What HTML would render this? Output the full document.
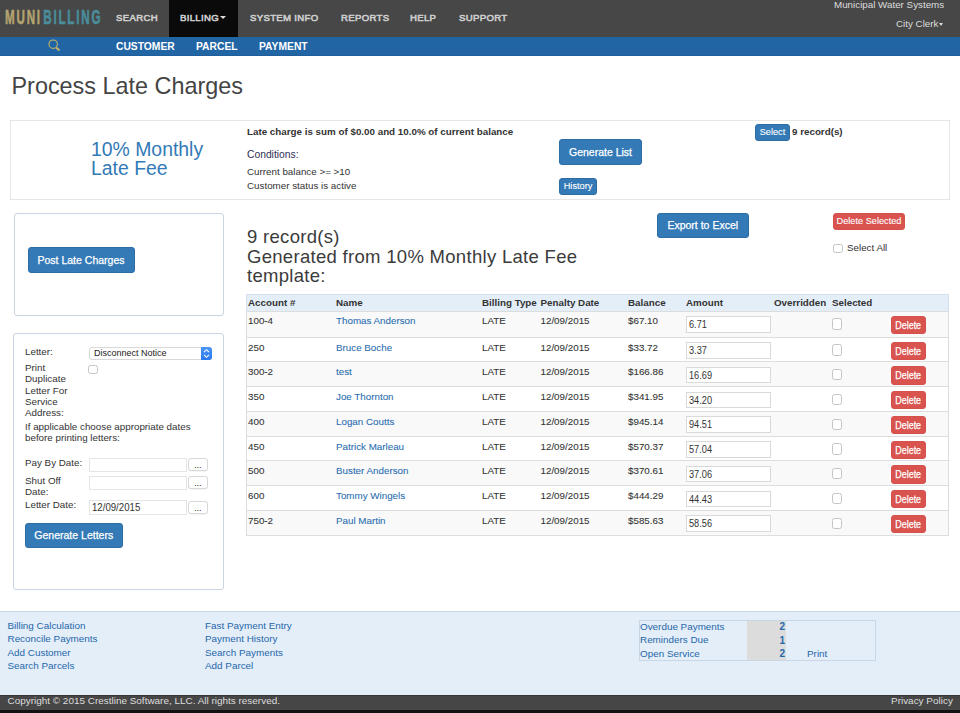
<!DOCTYPE html>
<html><head><meta charset="utf-8">
<style>
*{box-sizing:border-box;margin:0;padding:0}
html,body{width:960px;height:713px;overflow:hidden;background:#fff;font-family:"Liberation Sans",sans-serif;color:#333;font-size:9.8px}
.a{position:absolute;white-space:nowrap}
#hdr{position:absolute;left:0;top:0;width:960px;height:37px;background:#474747}
#sub{position:absolute;left:0;top:37px;width:960px;height:19px;background:#2265a5;border-bottom:1px solid #1f5e9c}
.nav{position:absolute;top:12px;font-weight:normal;-webkit-text-stroke:0.55px #d0d0d0;color:#d0d0d0;font-size:9.6px;letter-spacing:0.32px;line-height:12px}
.subn{position:absolute;top:41px;font-weight:bold;color:#fff;font-size:10.3px;line-height:12px}
.btn{position:absolute;background:#337ab7;border:1px solid #2e6da4;border-radius:3px;color:#fff;-webkit-text-stroke:0.25px #fff;text-align:center;white-space:nowrap}
.btnr{position:absolute;background:#d9534f;border:1px solid #d6504c;border-radius:3px;color:#fff;-webkit-text-stroke:0.25px #fff;text-align:center;white-space:nowrap}
.panel{position:absolute;border:1px solid #c9d5e3;border-radius:3px}
.lnk{color:#2a6eb0}
.cb{position:absolute;width:10px;height:10px;border:1px solid #c4c4c4;border-radius:2.5px;background:#fff}

.td{position:absolute;white-space:nowrap;font-size:9.8px;line-height:11px;-webkit-text-stroke:0.08px currentColor}
.th{position:absolute;white-space:nowrap;font-size:9.8px;line-height:11px;font-weight:bold}
.inp{position:absolute;width:85px;height:16.5px;border:1px solid #d9d9d9;background:#fff;font-size:11.5px;line-height:14.5px;padding-left:1.5px;color:#333}
.inp span{display:inline-block;transform:scaleX(0.8);transform-origin:0 50%}
.fl{position:absolute;white-space:nowrap;font-size:9.9px;line-height:11px;color:#2567a9}
.caret{display:inline-block;width:0;height:0;border-left:3px solid transparent;border-right:3px solid transparent;border-top:3px solid #ddd;vertical-align:middle;margin-left:1px;margin-top:-1px}
</style></head><body>
<div id="hdr"></div>
<div id="sub"></div>
<div class="a" style="left:5px;top:7px;font-weight:bold;font-size:20px;line-height:20px;letter-spacing:3.1px;transform:scaleX(0.58);-webkit-text-stroke:0.6px currentColor;transform-origin:0 0;"><span style="color:#b3a370">MUNI</span><span style="color:#4a8e9c;margin-left:2.5px">BILLING</span></div>
<div style="position:absolute;left:168.5px;top:0;width:69.5px;height:36.6px;background:#0a0a0a"></div>
<div class="nav" style="left:116px">SEARCH</div>
<div class="nav" style="left:180px">BILLING<span class="caret"></span></div>
<div class="nav" style="left:250px">SYSTEM INFO</div>
<div class="nav" style="left:341px">REPORTS</div>
<div class="nav" style="left:410px">HELP</div>
<div class="nav" style="left:459px">SUPPORT</div>
<div class="a" style="left:834px;top:0px;color:#ddd;font-size:9.8px;line-height:10px">Municipal Water Systems</div>
<div class="a" style="left:896px;top:18.7px;color:#ddd;font-size:9.8px;line-height:10px">City Clerk</div><div style="position:absolute;left:939px;top:23px;width:0;height:0;border-left:2.5px solid transparent;border-right:2.5px solid transparent;border-top:3px solid #ddd"></div>
<svg style="position:absolute;left:47px;top:38px" width="16" height="16" viewBox="0 0 16 16"><circle cx="6.2" cy="6.2" r="4.2" fill="none" stroke="#c9b36a" stroke-width="1.1"/><line x1="9.2" y1="9.4" x2="12.4" y2="12.4" stroke="#c9b36a" stroke-width="2"/></svg>
<div class="subn" style="left:116px">CUSTOMER</div>
<div class="subn" style="left:196px">PARCEL</div>
<div class="subn" style="left:259px">PAYMENT</div>

<div class="a" style="left:11.5px;top:72.7px;font-size:23.4px;line-height:26px;color:#444">Process Late Charges</div>

<div style="position:absolute;left:10px;top:120px;width:940px;height:80px;border:1px solid #e6e6e6"></div>
<div class="a" style="left:91px;top:139.6px;font-size:19.4px;line-height:19.6px;color:#337ab7;white-space:normal;width:140px">10% Monthly<br>Late Fee</div>
<div class="a" style="left:247px;top:126px;font-weight:bold;font-size:9.8px;line-height:11px">Late charge is sum of $0.00 and 10.0% of current balance</div>
<div class="a" style="left:247px;top:149px;font-size:10.3px;line-height:11px;color:#2f2f55">Conditions:</div>
<div class="a" style="left:247px;top:166px;font-size:9.8px;line-height:11px">Current balance &gt;= &gt;10</div>
<div class="a" style="left:247px;top:180px;font-size:9.8px;line-height:11px">Customer status is active</div>
<div class="btn" style="left:559px;top:139px;width:83px;height:26px;font-size:10.5px;line-height:24px">Generate List</div>
<div class="btn" style="left:559px;top:178px;width:38px;height:17px;font-size:9.2px;line-height:15px;-webkit-text-stroke:0.1px #fff">History</div>
<div class="btn" style="left:755px;top:124.3px;width:35px;height:16.5px;font-size:9.2px;line-height:14.5px;-webkit-text-stroke:0.1px #fff">Select</div>
<div class="a" style="left:792px;top:126px;font-weight:bold;font-size:9.8px;line-height:11px">9 record(s)</div>


<div class="panel" style="left:14px;top:213px;width:210px;height:103px"></div>
<div class="btn" style="left:27.5px;top:247px;width:107px;height:26px;font-size:10.5px;line-height:24px">Post Late Charges</div>

<div class="panel" style="left:13px;top:332.5px;width:211px;height:257px"></div>
<div class="a" style="left:25px;top:346px;line-height:11px">Letter:</div>
<div style="position:absolute;left:89px;top:347px;width:123px;height:13px;border:1px solid #d8d8d8;border-radius:3px;background:#fff"></div>
<div class="a" style="left:94px;top:348px;font-size:9px;line-height:11px;color:#222">Disconnect Notice</div>
<div style="position:absolute;left:201px;top:347px;width:11px;height:13px;background:linear-gradient(#4a95f7,#2a78f0);border-radius:0 3px 3px 0"></div><svg style="position:absolute;left:201px;top:347px" width="11" height="13" viewBox="0 0 11 13"><path d="M3 5.2 L5.5 2.7 L8 5.2 M3 7.8 L5.5 10.3 L8 7.8" fill="none" stroke="#fff" stroke-width="1.1"/></svg>
<div class="a" style="left:25px;top:362px;line-height:11.25px;white-space:normal;width:60px">Print<br>Duplicate<br>Letter For<br>Service<br>Address:</div>
<div class="cb" style="left:88px;top:365px;width:9.5px;height:9px"></div>
<div class="a" style="left:25px;top:421px;line-height:11.25px;white-space:normal;width:190px">If applicable choose appropriate dates<br>before printing letters:</div>
<div class="a" style="left:25px;top:456.5px;line-height:11px">Pay By Date:</div>
<div class="a" style="left:25px;top:474.5px;line-height:11.25px">Shut Off<br>Date:</div>
<div class="a" style="left:25px;top:499px;line-height:11px">Letter Date:</div>
<div style="position:absolute;left:89px;top:457.5px;width:98px;height:14px;border:1px solid #e5e5e5;background:#fff"></div>
<div style="position:absolute;left:89px;top:475.5px;width:98px;height:14px;border:1px solid #e5e5e5;background:#fff"></div>
<div style="position:absolute;left:89px;top:499.5px;width:98px;height:15px;border:1px solid #e5e5e5;background:#fff;font-size:10.6px;line-height:13px;padding-left:1.5px"><span style="display:inline-block;transform:scaleX(0.91);transform-origin:0 50%">12/09/2015</span></div>
<div class="dots" style="position:absolute;left:188px;top:458px;width:19.5px;height:13px;border:1px solid #d8d8d8;border-radius:3px;background:#fff;font-size:9px;line-height:12px;text-align:center;color:#222;box-shadow:0 0.5px 0.5px rgba(0,0,0,0.08)">...</div>
<div class="dots" style="position:absolute;left:188px;top:476px;width:19.5px;height:13px;border:1px solid #d8d8d8;border-radius:3px;background:#fff;font-size:9px;line-height:12px;text-align:center;color:#222;box-shadow:0 0.5px 0.5px rgba(0,0,0,0.08)">...</div>
<div class="dots" style="position:absolute;left:188px;top:501px;width:19.5px;height:13px;border:1px solid #d8d8d8;border-radius:3px;background:#fff;font-size:9px;line-height:12px;text-align:center;color:#222;box-shadow:0 0.5px 0.5px rgba(0,0,0,0.08)">...</div>
<div class="btn" style="left:24.5px;top:522.5px;width:98.5px;height:25.5px;font-size:10.5px;line-height:23.5px">Generate Letters</div>

<div class="a" style="left:247px;top:227px;font-size:18.5px;line-height:19.5px;letter-spacing:0.3px;white-space:normal;width:400px;color:#3b3b3b">9 record(s)<br>Generated from 10% Monthly Late Fee<br>template:</div>
<div class="btn" style="left:657px;top:213px;width:91.5px;height:25px;font-size:10.5px;line-height:23px">Export to Excel</div>
<div class="btnr" style="left:833px;top:213px;width:72px;height:16.5px;font-size:9.2px;line-height:14.5px;-webkit-text-stroke:0.1px #fff">Delete Selected</div>
<div class="cb" style="left:833px;top:243.5px;width:9.5px;height:9px"></div>
<div class="a" style="left:847px;top:242px;line-height:11px">Select All</div>

<div style="position:absolute;left:246px;top:294px;width:703px;height:17.5px;background:#e4eef9;border:1px solid #d5e0ec;border-bottom:1px solid #ddd"></div>
<div class="th" style="left:248px;top:296.7px">Account #</div>
<div class="th" style="left:336px;top:296.7px">Name</div>
<div class="th" style="left:482px;top:296.7px">Billing Type</div>
<div class="th" style="left:540.5px;top:296.7px">Penalty Date</div>
<div class="th" style="left:628px;top:296.7px">Balance</div>
<div class="th" style="left:686px;top:296.7px">Amount</div>
<div class="th" style="left:774px;top:296.7px">Overridden</div>
<div class="th" style="left:832px;top:296.7px">Selected</div>
<!--ROWS-->
<div style="position:absolute;left:246px;top:311.5px;width:703px;height:26.0px;background:#f9f9f9;border-bottom:1px solid #ddd"></div>
<div class="td" style="left:248px;top:315.2px">100-4</div>
<div class="td lnk" style="left:336px;top:315.2px">Thomas Anderson</div>
<div class="td" style="left:482px;top:315.2px">LATE</div>
<div class="td" style="left:540.5px;top:315.2px">12/09/2015</div>
<div class="td" style="left:628px;top:315.2px">$67.10</div>
<div class="inp" style="left:686px;top:316.2px"><span>6.71</span></div>
<div class="cb" style="left:832px;top:318.4px;height:11.2px"></div>
<div class="btnr" style="left:891px;top:315.5px;width:35px;height:18.3px;font-size:10.5px;line-height:16.3px"><span style="display:inline-block;transform:scaleX(0.85)">Delete</span></div>
<div style="position:absolute;left:246px;top:337.5px;width:703px;height:24.75px;background:#fff;border-bottom:1px solid #ddd"></div>
<div class="td" style="left:248px;top:341.5px">250</div>
<div class="td lnk" style="left:336px;top:341.5px">Bruce Boche</div>
<div class="td" style="left:482px;top:341.5px">LATE</div>
<div class="td" style="left:540.5px;top:341.5px">12/09/2015</div>
<div class="td" style="left:628px;top:341.5px">$33.72</div>
<div class="inp" style="left:686px;top:342.2px"><span>3.37</span></div>
<div class="cb" style="left:832px;top:344.4px;height:11.2px"></div>
<div class="btnr" style="left:891px;top:341.5px;width:35px;height:18.3px;font-size:10.5px;line-height:16.3px"><span style="display:inline-block;transform:scaleX(0.85)">Delete</span></div>
<div style="position:absolute;left:246px;top:362.25px;width:703px;height:24.75px;background:#f9f9f9;border-bottom:1px solid #ddd"></div>
<div class="td" style="left:248px;top:366.25px">300-2</div>
<div class="td lnk" style="left:336px;top:366.25px">test</div>
<div class="td" style="left:482px;top:366.25px">LATE</div>
<div class="td" style="left:540.5px;top:366.25px">12/09/2015</div>
<div class="td" style="left:628px;top:366.25px">$166.86</div>
<div class="inp" style="left:686px;top:366.95px"><span>16.69</span></div>
<div class="cb" style="left:832px;top:369.15px;height:11.2px"></div>
<div class="btnr" style="left:891px;top:366.25px;width:35px;height:18.3px;font-size:10.5px;line-height:16.3px"><span style="display:inline-block;transform:scaleX(0.85)">Delete</span></div>
<div style="position:absolute;left:246px;top:387.0px;width:703px;height:24.75px;background:#fff;border-bottom:1px solid #ddd"></div>
<div class="td" style="left:248px;top:391.0px">350</div>
<div class="td lnk" style="left:336px;top:391.0px">Joe Thornton</div>
<div class="td" style="left:482px;top:391.0px">LATE</div>
<div class="td" style="left:540.5px;top:391.0px">12/09/2015</div>
<div class="td" style="left:628px;top:391.0px">$341.95</div>
<div class="inp" style="left:686px;top:391.7px"><span>34.20</span></div>
<div class="cb" style="left:832px;top:393.9px;height:11.2px"></div>
<div class="btnr" style="left:891px;top:391.0px;width:35px;height:18.3px;font-size:10.5px;line-height:16.3px"><span style="display:inline-block;transform:scaleX(0.85)">Delete</span></div>
<div style="position:absolute;left:246px;top:411.75px;width:703px;height:24.75px;background:#f9f9f9;border-bottom:1px solid #ddd"></div>
<div class="td" style="left:248px;top:415.75px">400</div>
<div class="td lnk" style="left:336px;top:415.75px">Logan Coutts</div>
<div class="td" style="left:482px;top:415.75px">LATE</div>
<div class="td" style="left:540.5px;top:415.75px">12/09/2015</div>
<div class="td" style="left:628px;top:415.75px">$945.14</div>
<div class="inp" style="left:686px;top:416.45px"><span>94.51</span></div>
<div class="cb" style="left:832px;top:418.65px;height:11.2px"></div>
<div class="btnr" style="left:891px;top:415.75px;width:35px;height:18.3px;font-size:10.5px;line-height:16.3px"><span style="display:inline-block;transform:scaleX(0.85)">Delete</span></div>
<div style="position:absolute;left:246px;top:436.5px;width:703px;height:24.75px;background:#fff;border-bottom:1px solid #ddd"></div>
<div class="td" style="left:248px;top:440.5px">450</div>
<div class="td lnk" style="left:336px;top:440.5px">Patrick Marleau</div>
<div class="td" style="left:482px;top:440.5px">LATE</div>
<div class="td" style="left:540.5px;top:440.5px">12/09/2015</div>
<div class="td" style="left:628px;top:440.5px">$570.37</div>
<div class="inp" style="left:686px;top:441.2px"><span>57.04</span></div>
<div class="cb" style="left:832px;top:443.4px;height:11.2px"></div>
<div class="btnr" style="left:891px;top:440.5px;width:35px;height:18.3px;font-size:10.5px;line-height:16.3px"><span style="display:inline-block;transform:scaleX(0.85)">Delete</span></div>
<div style="position:absolute;left:246px;top:461.25px;width:703px;height:24.75px;background:#f9f9f9;border-bottom:1px solid #ddd"></div>
<div class="td" style="left:248px;top:465.25px">500</div>
<div class="td lnk" style="left:336px;top:465.25px">Buster Anderson</div>
<div class="td" style="left:482px;top:465.25px">LATE</div>
<div class="td" style="left:540.5px;top:465.25px">12/09/2015</div>
<div class="td" style="left:628px;top:465.25px">$370.61</div>
<div class="inp" style="left:686px;top:465.95px"><span>37.06</span></div>
<div class="cb" style="left:832px;top:468.15px;height:11.2px"></div>
<div class="btnr" style="left:891px;top:465.25px;width:35px;height:18.3px;font-size:10.5px;line-height:16.3px"><span style="display:inline-block;transform:scaleX(0.85)">Delete</span></div>
<div style="position:absolute;left:246px;top:486.0px;width:703px;height:24.75px;background:#fff;border-bottom:1px solid #ddd"></div>
<div class="td" style="left:248px;top:490.0px">600</div>
<div class="td lnk" style="left:336px;top:490.0px">Tommy Wingels</div>
<div class="td" style="left:482px;top:490.0px">LATE</div>
<div class="td" style="left:540.5px;top:490.0px">12/09/2015</div>
<div class="td" style="left:628px;top:490.0px">$444.29</div>
<div class="inp" style="left:686px;top:490.7px"><span>44.43</span></div>
<div class="cb" style="left:832px;top:492.9px;height:11.2px"></div>
<div class="btnr" style="left:891px;top:490.0px;width:35px;height:18.3px;font-size:10.5px;line-height:16.3px"><span style="display:inline-block;transform:scaleX(0.85)">Delete</span></div>
<div style="position:absolute;left:246px;top:510.75px;width:703px;height:24.75px;background:#f9f9f9;border-bottom:1px solid #ddd"></div>
<div class="td" style="left:248px;top:514.75px">750-2</div>
<div class="td lnk" style="left:336px;top:514.75px">Paul Martin</div>
<div class="td" style="left:482px;top:514.75px">LATE</div>
<div class="td" style="left:540.5px;top:514.75px">12/09/2015</div>
<div class="td" style="left:628px;top:514.75px">$585.63</div>
<div class="inp" style="left:686px;top:515.45px"><span>58.56</span></div>
<div class="cb" style="left:832px;top:517.65px;height:11.2px"></div>
<div class="btnr" style="left:891px;top:514.75px;width:35px;height:18.3px;font-size:10.5px;line-height:16.3px"><span style="display:inline-block;transform:scaleX(0.85)">Delete</span></div>
<!--/ROWS-->
<div style="position:absolute;left:246px;top:311px;width:1px;height:225px;background:#ddd"></div>
<div style="position:absolute;left:948px;top:311px;width:1px;height:225px;background:#ddd"></div>


<div style="position:absolute;left:0;top:611px;width:960px;height:84px;background:#e4eef9;border-top:1px solid #c8d6e6"></div>
<div class="fl" style="left:7.5px;top:618.8px;line-height:13.4px">Billing Calculation<br>Reconcile Payments<br>Add Customer<br>Search Parcels</div>
<div class="fl" style="left:205px;top:618.8px;line-height:13.4px">Fast Payment Entry<br>Payment History<br>Search Payments<br>Add Parcel</div>
<div style="position:absolute;left:638.5px;top:619.5px;width:237px;height:41.5px;border:1px solid #c9d6e6"></div>
<div style="position:absolute;left:747px;top:620.5px;width:39px;height:39.5px;background:#dcdcdc"></div>
<div class="fl" style="left:640px;top:619.6px;line-height:13.5px">Overdue Payments<br>Reminders Due<br>Open Service</div>
<div class="fl" style="left:760px;top:620.2px;width:25px;text-align:right;font-weight:bold;font-size:10px;line-height:13.5px">2<br>1<br>2</div>
<div class="fl" style="left:807px;top:646.6px;line-height:13.5px">Print</div>

<div style="position:absolute;left:0;top:694.6px;width:960px;height:15.4px;background:#464646;border-top:1px solid #363636"></div>
<div style="position:absolute;left:0;top:710px;width:960px;height:3px;background:#121212"></div>
<div class="a" style="left:7.5px;top:695.2px;color:#ddd;line-height:11px;font-size:9.95px">Copyright &copy; 2015 Crestline Software, LLC. All rights reserved.</div>
<div class="a" style="left:891px;top:695.2px;color:#ddd;line-height:11px;font-size:9.95px">Privacy Policy</div>
</body></html>
